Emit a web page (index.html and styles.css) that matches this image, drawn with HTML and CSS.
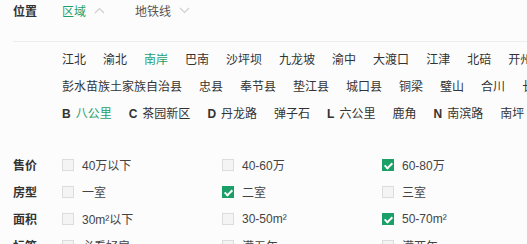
FILE: index.html
```html
<!DOCTYPE html>
<html lang="zh">
<head>
<meta charset="utf-8">
<link rel="stylesheet" href="styles.css">
</head>
<body>
<div class="page">
  <div class="pos-row">
    <div class="label">位置</div>
    <div class="tab active">区域<svg class="chev" width="11" height="7" viewBox="0 0 11 7"><path d="M1 6 L5.5 1.5 L10 6" fill="none" stroke="#cfcfcf" stroke-width="1.2"/></svg></div>
    <div class="tab">地铁线<svg class="chev" width="11" height="7" viewBox="0 0 11 7"><path d="M1 1 L5.5 5.5 L10 1" fill="none" stroke="#cfcfcf" stroke-width="1.2"/></svg></div>
  </div>
  <div class="divider"></div>
  <div class="districts">
    <div class="drow">
      <span>江北</span><span>渝北</span><span class="on">南岸</span><span>巴南</span><span>沙坪坝</span><span>九龙坡</span><span>渝中</span><span>大渡口</span><span>江津</span><span>北碚</span><span>开州</span>
    </div>
    <div class="drow">
      <span>彭水苗族土家族自治县</span><span>忠县</span><span>奉节县</span><span>垫江县</span><span>城口县</span><span>铜梁</span><span>璧山</span><span>合川</span><span>长寿</span>
    </div>
    <div class="drow">
      <span><b class="ltr">B</b><em class="on">八公里</em></span><span><b class="ltr">C</b>茶园新区</span><span><b class="ltr">D</b>丹龙路</span><span>弹子石</span><span><b class="ltr">L</b>六公里</span><span>鹿角</span><span><b class="ltr">N</b>南滨路</span><span>南坪</span>
    </div>
  </div>
  <div class="filters">
    <div class="frow">
      <div class="label">售价</div>
      <label class="opt"><i class="box"></i>40万以下</label>
      <label class="opt"><i class="box"></i>40-60万</label>
      <label class="opt"><i class="box checked"></i>60-80万</label>
    </div>
    <div class="frow">
      <div class="label">房型</div>
      <label class="opt"><i class="box"></i>一室</label>
      <label class="opt"><i class="box checked"></i>二室</label>
      <label class="opt"><i class="box"></i>三室</label>
    </div>
    <div class="frow">
      <div class="label">面积</div>
      <label class="opt"><i class="box"></i>30m²以下</label>
      <label class="opt"><i class="box"></i>30-50m²</label>
      <label class="opt"><i class="box checked"></i>50-70m²</label>
    </div>
    <div class="frow">
      <div class="label">标签</div>
      <label class="opt"><i class="box"></i>必看好房</label>
      <label class="opt"><i class="box"></i>满五年</label>
      <label class="opt"><i class="box"></i>满两年</label>
    </div>
  </div>
</div>
</body>
</html>
```

FILE: styles.css
```css
html, body {
  margin: 0;
  padding: 0;
  background: #fcfcfc;
  overflow: hidden;
}
.page {
  width: 527px;
  height: 244px;
  padding-left: 13px;
  box-sizing: border-box;
  font-family: "Liberation Sans", "Noto Sans CJK SC", sans-serif;
  font-size: 12px;
  color: #333;
  overflow: hidden;
}
.label {
  width: 49px;
  flex: none;
  font-weight: bold;
  color: #333;
  font-size: 12px;
}
.pos-row {
  display: flex;
  align-items: center;
  height: 20px;
  padding-top: 0;
}
.tab {
  display: flex;
  align-items: center;
  width: 73px;
  color: #555;
}
.tab.active {
  color: #1fa06a;
}
.chev {
  margin-left: 8px;
}
.divider {
  height: 1px;
  background: #ededed;
  margin-top: 21px;
}
.districts {
  padding-left: 49px;
  margin-top: 5px;
}
.drow {
  display: flex;
  gap: 17px;
  height: 27px;
  line-height: 27px;
  white-space: nowrap;
}
.drow span {
  flex: none;
}
.on {
  color: #1fa06a;
}
em {
  font-style: normal;
}
.ltr {
  font-weight: bold;
  margin-right: 5px;
  color: #333;
}
.filters {
  margin-top: 23px;
}
.frow {
  display: flex;
  align-items: center;
  height: 27px;
}
.opt {
  display: flex;
  align-items: center;
  width: 160px;
  flex: none;
  color: #444;
}
.box {
  width: 10px;
  height: 10px;
  border: 1px solid #dcdcdc;
  background: #f4f4f4;
  margin-right: 8px;
  position: relative;
}
.box.checked {
  background: #1a9f66;
  border-color: #1a9f66;
}
.box.checked::after {
  content: "";
  position: absolute;
  left: 3px;
  top: 1px;
  width: 3px;
  height: 6px;
  border-right: 2px solid #fff;
  border-bottom: 2px solid #fff;
  transform: rotate(45deg);
}
```
